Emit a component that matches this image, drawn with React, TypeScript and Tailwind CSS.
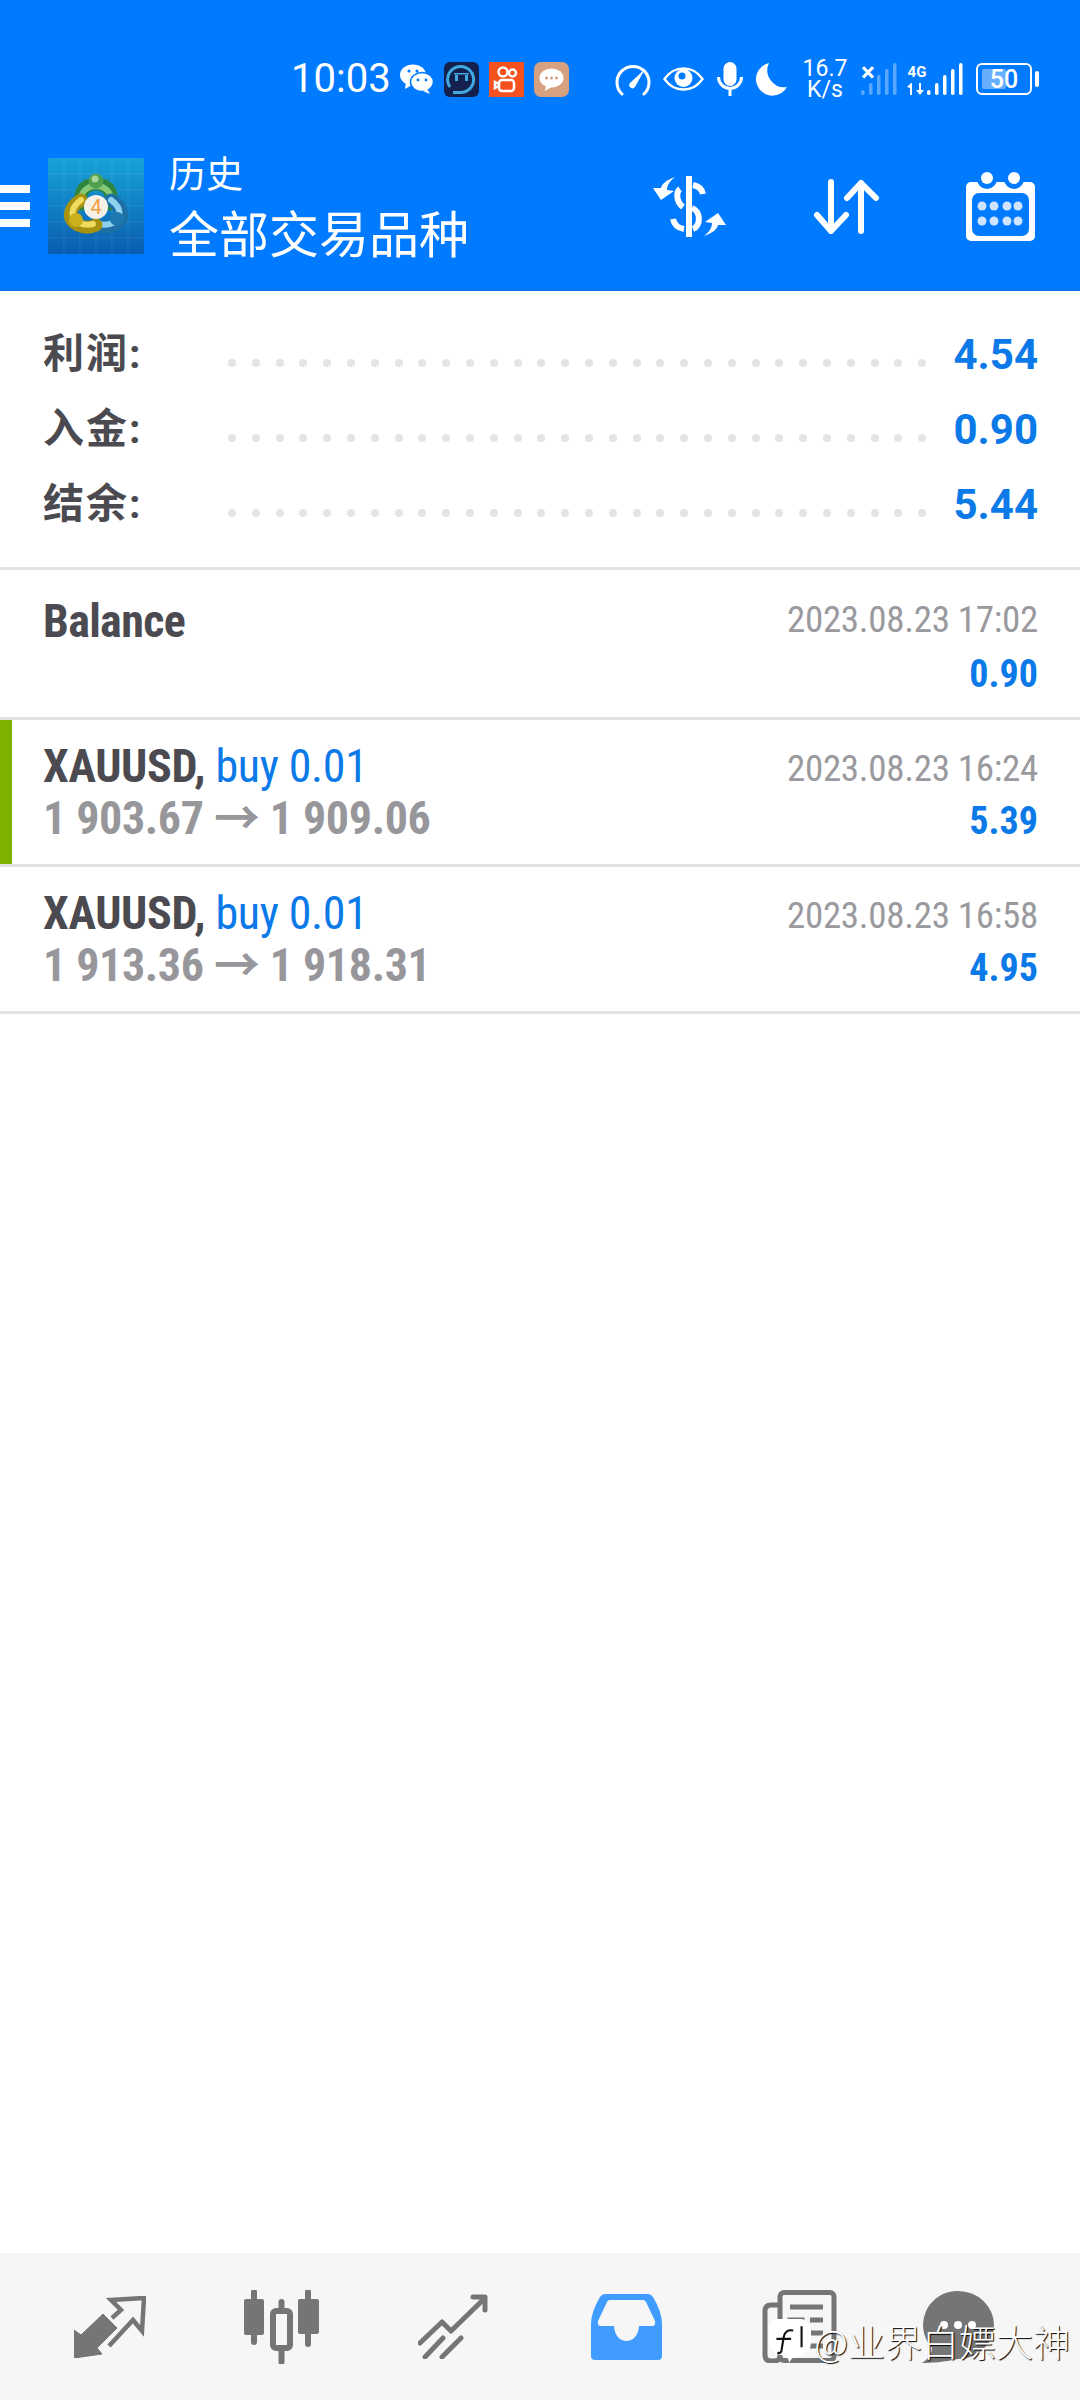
const sans = "font-['Roboto','Noto_Sans_CJK_SC',sans-serif]";
const cond = "font-['Roboto','Noto_Sans_CJK_SC',sans-serif] [font-stretch:75%]";

const summary = [
  { label: "利润:", value: "4.54" },
  { label: "入金:", value: "0.90" },
  { label: "结余:", value: "5.44" },
];

const trades = [
  { open: "1 903.67", close: "1 909.06", time: "2023.08.23 16:24", profit: "5.39", bar: true },
  { open: "1 913.36", close: "1 918.31", time: "2023.08.23 16:58", profit: "4.95", bar: false },
];

const WeChat = () => (
  <svg width="33" height="30" viewBox="0 0 33 30" className="ml-[14px]">
    <ellipse cx="13" cy="11" rx="13" ry="10.5" fill="#fff" />
    <path d="M6 18l-1 7 7-4z" fill="#fff" />
    <ellipse cx="22" cy="18" rx="11.5" ry="9.5" fill="#fff" stroke="#007aff" strokeWidth="1.5" />
    <path d="M27 25l3 5-7-3z" fill="#fff" />
    <circle cx="9" cy="7" r="1.6" fill="#007aff" />
    <circle cx="17" cy="7" r="1.6" fill="#007aff" />
    <circle cx="18" cy="16" r="1.4" fill="#007aff" />
    <circle cx="26" cy="16" r="1.4" fill="#007aff" />
  </svg>
);

const ChatApp = () => (
  <svg width="35" height="35" viewBox="0 0 35 35" className="ml-[11px]">
    <rect width="35" height="35" rx="6" fill="#14214f" />
    <path d="M6 25A13 13 0 1 1 17.500 30.500H9" fill="none" stroke="#3fa9e0" strokeWidth="3" />
    <rect x="11" y="13" width="3" height="6" fill="#3fa9e0" />
    <rect x="21" y="13" width="3" height="6" fill="#3fa9e0" />
    <rect x="10" y="11" width="15" height="1.500" fill="#3fa9e0" />
  </svg>
);

const VideoApp = () => (
  <svg width="35" height="35" viewBox="0 0 35 35" className="ml-[10px]">
    <rect width="35" height="35" fill="#f4511e" />
    <g fill="none" stroke="#fff" strokeWidth="2.500">
      <circle cx="14" cy="10" r="4.500" />
      <circle cx="23.500" cy="11" r="3.500" />
      <rect x="10" y="18" width="15" height="11" rx="3" />
      <path d="M10 22L6 20v6l4-2" />
    </g>
  </svg>
);

const MessageApp = () => (
  <svg width="35" height="35" viewBox="0 0 35 35" className="ml-[10px]">
    <rect width="35" height="35" rx="7" fill="#d6a181" />
    <ellipse cx="17.500" cy="16" rx="12" ry="9.500" fill="#fff" />
    <path d="M12 23l-1 6 8-5z" fill="#fff" />
    <circle cx="12.500" cy="16" r="1.500" fill="#d6a181" />
    <circle cx="17.500" cy="16" r="1.500" fill="#d6a181" />
    <circle cx="22.500" cy="16" r="1.500" fill="#d6a181" />
  </svg>
);

const Gauge = () => (
  <svg width="36" height="33" viewBox="0 0 36 33" className="ml-[46px]">
    <path d="M7 31A16 16 0 1 1 29 31" fill="none" stroke="#fff" strokeWidth="3" strokeLinecap="round" />
    <path d="M15 20L30 6l-10 18a3 3 0 0 1-5-4z" fill="#fff" />
  </svg>
);

const Eye = () => (
  <svg width="41" height="24" viewBox="0 0 41 24" className="ml-[12px]">
    <path d="M1.500 12C8 3 14 1.500 20.500 1.500S33 3 39.500 12C33 21 27 22.500 20.500 22.500S8 21 1.500 12z" fill="none" stroke="#fff" strokeWidth="2.500" />
    <circle cx="20.500" cy="11" r="9" fill="#fff" />
    <circle cx="19" cy="9" r="3.500" fill="#007aff" />
  </svg>
);

const Mic = () => (
  <svg width="26" height="34" viewBox="0 0 26 34" className="ml-[13px]">
    <rect x="6.500" y="0" width="13" height="24" rx="6.500" fill="#fff" />
    <path d="M1.500 15a11.500 11.500 0 0 0 23 0M13 27v7" fill="none" stroke="#fff" strokeWidth="3" />
  </svg>
);

const Moon = () => (
  <svg width="32" height="33" viewBox="0 0 32 33" className="ml-[12px]">
    <path d="M14 0A16.500 16.500 0 1 0 32 24 17 17 0 0 1 14 0z" fill="#fff" />
  </svg>
);

const Bars = ({ faint }: { faint: boolean }) => (
  <svg width="36" height="33" viewBox="0 0 36 33" opacity={faint ? 0.35 : 1}>
    <rect x="0" y="27" width="3.500" height="5" rx="1.700" fill="#fff" />
    <rect x="8" y="20" width="3.500" height="12" rx="1.700" fill="#fff" />
    <rect x="16" y="12" width="3.500" height="20" rx="1.700" fill="#fff" />
    <rect x="24" y="6" width="3.500" height="26" rx="1.700" fill="#fff" />
    <rect x="32" y="0" width="3.500" height="32" rx="1.700" fill="#fff" />
  </svg>
);

const Hamburger = () => (
  <div className="flex flex-col gap-[9px] w-[30px]">
    <div className="h-[8px] bg-white" />
    <div className="h-[8px] bg-white" />
    <div className="h-[8px] bg-white" />
  </div>
);

const Mt4Logo = () => (
  <svg width="96" height="96" viewBox="0 0 96 96" className="ml-[18px]">
    <defs>
      <linearGradient id="bg" x1="0" y1="0" x2="0" y2="1">
        <stop offset="0" stopColor="#17a3d8" />
        <stop offset="1" stopColor="#0a5cb0" />
      </linearGradient>
    </defs>
    <rect width="96" height="96" fill="url(#bg)" />
    <path d="M0 16h96M0 32h96M0 48h96M0 64h96M0 80h96M16 0v96M32 0v96M48 0v96M64 0v96M80 0v96" stroke="#fff" strokeOpacity="0.08" />
    <g fill="none" strokeLinecap="round">
      <path d="M33 46C31 32 38 26 48 26S65 32 63 46" stroke="#2f8540" strokeWidth="13" />
      <path d="M33 44C32 34 39 28 48 28S64 34 63 44" stroke="#86c874" strokeWidth="6" />
      <path d="M63 42C76 50 77 62 66 67 60 70 54 70 48 67" stroke="#1d6fa6" strokeWidth="13" />
      <path d="M63 42C74 50 74 60 65 65 60 67 55 67 51 66" stroke="#8fd2ef" strokeWidth="6" />
      <path d="M33 42C20 50 19 62 30 67 36 70 42 70 48 67" stroke="#a8920f" strokeWidth="13" />
      <path d="M33 42C22 50 22 60 31 65 36 67 41 67 45 66" stroke="#efdc5e" strokeWidth="6" />
    </g>
    <circle cx="48" cy="23" r="7.500" fill="#4f9f50" />
    <circle cx="47" cy="21" r="3.500" fill="#a7d798" />
    <circle cx="28" cy="62" r="7" fill="#c9b01c" />
    <circle cx="69" cy="61" r="7" fill="#1f79b0" />
    <circle cx="48" cy="49" r="12" fill="#f5f1e8" />
    <text x="48" y="56" textAnchor="middle" fontSize="20" fontFamily="Roboto" fill="#f0a040">4</text>
  </svg>
);

const DollarIcon = () => (
  <svg width="73" height="61" viewBox="0 0 73 61">
    <path d="M36 1v59" stroke="#fff" strokeWidth="6" strokeLinecap="round" />
    <path d="M40 9c5 1 9 4 10 9M27 13c-4 3-4 13 3 18M39 32c9 3 9 18 1 21M20 43c1 5 5 9 11 10" fill="none" stroke="#fff" strokeWidth="6" />
    <path d="M22 1C13 4 9 8 8 12L0 12l8 12 13-9-7-1C14 9 17 5 22 1z" fill="#fff" />
    <path d="M51 60C60 57 64 53 65 49L73 49 65 37 52 46 59 47C59 52 56 56 51 60z" fill="#fff" />
  </svg>
);

const ArrowsIcon = () => (
  <svg width="67" height="55" viewBox="0 0 67 55" className="ml-[87px]" fill="none" stroke="#fff" strokeWidth="6" strokeLinecap="round" strokeLinejoin="round">
    <path d="M18 3v49M4 36l14 16 15-16" />
    <path d="M48 52V4M34 19L48 4l15 15" />
  </svg>
);

const CalendarIcon = () => (
  <svg width="69" height="69" viewBox="0 0 69 69" className="ml-[86px]">
    <rect x="0" y="10" width="69" height="59" rx="5" fill="#fff" />
    <circle cx="21" cy="7" r="10" fill="#007aff" />
    <circle cx="48" cy="7" r="10" fill="#007aff" />
    <circle cx="21" cy="6" r="6" fill="#fff" />
    <circle cx="48" cy="6" r="6" fill="#fff" />
    <rect x="6" y="21" width="57" height="43" rx="7" fill="#007aff" />
    {[34, 49].map((y) =>
      [16, 28, 41, 52].map((x) => <circle key={x + "-" + y} cx={x} cy={y} r="4.500" fill="#cfe4ff" />)
    )}
  </svg>
);

const ArrowsNav = () => (
  <svg width="72" height="62" viewBox="0 0 72 62" className="ml-[74px]">
    <path d="M0 62V34l7 5 22-21 14 14-20 20 5 6z" fill="#757575" strokeLinejoin="round" stroke="#757575" strokeWidth="1" />
    <path d="M38 22l9-8L37 4l33-2-2 33-9-11-24 26" fill="none" stroke="#757575" strokeWidth="4.500" />
  </svg>
);

const CandlesNav = () => (
  <svg width="75" height="74" viewBox="0 0 75 74" className="ml-[98px]">
    <path d="M10 2v50M64 2v52M37.500 12v60" stroke="#757575" strokeWidth="6" strokeLinecap="round" />
    <rect x="0" y="9" width="20" height="36" rx="2" fill="#757575" />
    <rect x="54" y="9" width="21" height="35" rx="2" fill="#757575" />
    <rect x="29" y="21" width="17" height="37" rx="3" fill="#f6f6f6" stroke="#757575" strokeWidth="6" />
  </svg>
);

const TrendNav = () => (
  <svg width="71" height="65" viewBox="0 0 71 65" className="ml-[99px]" fill="none" stroke="#757575" strokeWidth="5" strokeLinecap="round" strokeLinejoin="round">
    <path d="M2 49l22-21 9 9L67 4M55 3h12v13" />
    <path d="M7 63l18-19M24 63l19-19" />
  </svg>
);

const TrayNav = () => (
  <svg width="71" height="66" viewBox="0 0 71 66" className="ml-[102px]">
    <path d="M14 0H57Q60 0 62 3 71 18 71 30V62Q71 66 67 66H4Q0 66 0 62V30Q0 18 9 3 11 0 14 0z" fill="#409cff" />
    <path d="M19 6H52Q54 6 55 8L64 27Q65 32 61 32H48C47 52 24 52 23 32H10Q6 32 7 27L16 8Q17 6 19 6z" fill="#f6f6f6" />
  </svg>
);

const NewsNav = () => (
  <svg width="75" height="73" viewBox="0 0 75 73" className="ml-[100px]" fill="none" stroke="#757575" strokeWidth="5">
    <rect x="18" y="2.500" width="54" height="68" rx="4" />
    <path d="M18 66c0 4-3 5-6 5H9c-4 0-6-2-6-6V21c0-4 2-6 6-6h8" />
    <path d="M28 17h33M28 30h12v26H28zM48 30h13M48 43h13M48 56h13" />
  </svg>
);

const ChatNav = () => (
  <svg width="72" height="72" viewBox="0 0 72 72" className="ml-[85px]">
    <path d="M36 0a36 34 0 0 1 0 68C22 71 10 72 0 72c6-4 10-9 10-15A34 34 0 0 1 36 0z" fill="#757575" />
    <circle cx="22" cy="34" r="4" fill="#fff" />
    <circle cx="36" cy="34" r="4" fill="#fff" />
    <circle cx="50" cy="34" r="4" fill="#fff" />
  </svg>
);

export default function App() {
  return (
    <div className={`w-[1080px] h-[2400px] bg-white flex flex-col relative overflow-hidden ${sans}`}>
      <header className="h-[291px] bg-[#007aff] border-b-[2px] border-[#0672e6] flex flex-col text-white">
        <div className="h-[158px] flex items-center pl-[291px]">
          <span className="text-[40px] leading-none w-[95px]">10:03</span>
          <WeChat />
          <ChatApp />
          <VideoApp />
          <MessageApp />
          <Gauge />
          <Eye />
          <Mic />
          <Moon />
          <div className="ml-[16px] w-[44px] flex flex-col items-center text-[23px] leading-[21px]">
            <span>16.7</span>
            <span>K/s</span>
          </div>
          <div className="ml-[14px] relative">
            <Bars faint />
            <span className="absolute -top-[4px] left-0 text-[26px] leading-none font-bold">×</span>
          </div>
          <div className="ml-[10px] w-[20px] flex flex-col items-center">
            <span className="text-[15px] leading-[18px] font-bold">4G</span>
            <svg width="20" height="12" viewBox="0 0 20 12" className="mt-[2px]" fill="#fff">
              <path d="M0 4l4-4 1 0v12H3V5zM12 0h2v7l3 0-4 5-4-5h3z" />
            </svg>
          </div>
          <Bars faint={false} />
          <div className="ml-[13px] w-[56px] h-[32px] border-[2.5px] border-white rounded-[6px] relative flex items-center justify-center">
            <div className="absolute left-[4px] top-[4px] bottom-[4px] w-[24px] bg-white/40 rounded-[2px]" />
            <span className="relative text-[25px] leading-none font-medium">50</span>
          </div>
          <div className="ml-[3px] w-[4px] h-[16px] bg-white rounded-full" />
        </div>
        <div className="h-[96px] flex items-center">
          <Hamburger />
          <Mt4Logo />
          <div className="ml-[25px] flex flex-col mt-[14px]">
            <span className="text-[37px] leading-[46px]">历史</span>
            <span className="text-[50px] leading-[74px]">全部交易品种</span>
          </div>
          <div className="ml-auto pr-[45px] flex items-center">
            <DollarIcon />
            <ArrowsIcon />
            <CalendarIcon />
          </div>
        </div>
      </header>

      <section className="h-[279px] pt-[26px] pl-[43px] pr-[42px] border-b-[3px] border-[#e4e4e4] flex flex-col">
        {summary.map((row) => (
          <div key={row.label} className="h-[75px] flex items-center">
            <span className="w-[185px] text-[41px] tracking-[2px] leading-none font-bold text-[#4a4a50]">{row.label}</span>
            <div className="flex-1 flex justify-between pr-[27px] pt-[16px]">
              {Array.from({ length: 30 }).map((_, i) => (
                <span key={i} className="w-[8px] h-[8px] rounded-full bg-[#e4e4e4]" />
              ))}
            </div>
            <span className="text-[42px] leading-none font-bold text-[#0b7ae8]">{row.value}</span>
          </div>
        ))}
      </section>

      <section className="h-[150px] pl-[43px] pr-[42px] border-b-[3px] border-[#e4e4e4] flex justify-between">
        <span className={`mt-[25px] text-[46px] tracking-[-0.65px] leading-[52px] font-bold text-[#4a4a50] ${cond}`}>Balance</span>
        <div className="flex flex-col items-end mt-[26px]">
          <span className={`text-[37px] tracking-[-0.3px] leading-[48px] text-[#9a9a9e] ${cond}`}>2023.08.23 17:02</span>
          <span className={`mt-[6px] text-[38px] leading-[48px] font-bold text-[#0b7ae8] ${cond}`}>0.90</span>
        </div>
      </section>

      {trades.map((t) => (
        <section key={t.time} className="h-[147px] border-b-[3px] border-[#e4e4e4] flex">
          <div className={t.bar ? "w-[12px] bg-[#7eb000]" : "w-[12px]"} />
          <div className="flex-1 pl-[31px] pr-[42px] pt-[20px] flex justify-between">
            <div className="flex flex-col">
              <div className={`text-[46px] tracking-[-0.35px] leading-[52px] ${cond}`}>
                <span className="font-bold text-[#4a4a50]">XAUUSD, </span>
                <span className="text-[#0b7ae8]">buy 0.01</span>
              </div>
              <div className={`text-[46px] tracking-[-0.35px] leading-[52px] font-bold text-[#97979b] ${cond}`}>
                {t.open} → {t.close}
              </div>
            </div>
            <div className="flex flex-col items-end pt-[3px]">
              <span className={`text-[37px] tracking-[-0.3px] leading-[52px] text-[#9a9a9e] ${cond}`}>{t.time}</span>
              <span className={`text-[38px] leading-[52px] font-bold text-[#0b7ae8] ${cond}`}>{t.profit}</span>
            </div>
          </div>
        </section>
      ))}

      <div className="flex-1" />

      <nav className="h-[147px] bg-[#f6f6f6] flex items-center">
        <ArrowsNav />
        <CandlesNav />
        <TrendNav />
        <TrayNav />
        <NewsNav />
        <ChatNav />
      </nav>

      <div className="absolute right-[10px] top-[2316px] flex items-center text-white font-['Noto_Sans_CJK_SC',sans-serif] font-light text-[37px] leading-[44px] [text-shadow:1px_1px_1px_#000]">
        <svg width="44" height="50" viewBox="0 0 42 44" className="mr-[3px]">
          <path d="M10 1h22c6 0 10 5 10 12v10c0 9-6 14-14 14-3 0-5 2-7 6 0-4-2-6-5-7C8 35 2 30 2 23V10c0-5 3-9 8-9z" fill="#fff" />
          <path d="M25 12c-5-1-8 1-9 6l-2 12c0 3-2 4-4 3M9 20h14M33 8v20" fill="none" stroke="#111" strokeWidth="2" />
        </svg>
        <span>@业界白嫖大神</span>
      </div>
    </div>
  );
}
